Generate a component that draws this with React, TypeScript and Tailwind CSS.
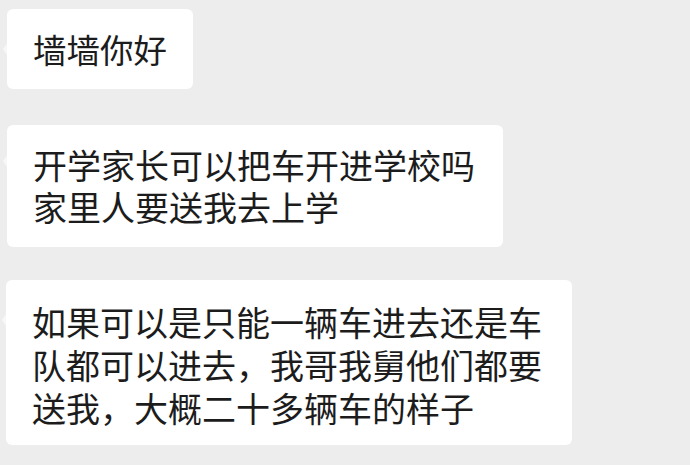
const messages = [
  { lines: ["墙墙你好"], size: "text-[33.5px] leading-[42px]", box: "mt-[9px] ml-[7px] pt-[19px] pb-[19px] pl-[26px] pr-[26px]", tail: "top-[34px]" },
  {
    lines: ["开学家长可以把车开进学校吗", "家里人要送我去上学"],
    size: "text-[34px] leading-[42px]",
    box: "mt-[36px] ml-[7px] pt-[19px] pb-[19px] pl-[26px] pr-[28px]",
    tail: "top-[30px]",
  },
  {
    lines: ["如果可以是只能一辆车进去还是车", "队都可以进去，我哥我舅他们都要", "送我，大概二十多辆车的样子"],
    size: "text-[34px] leading-[43px]",
    box: "mt-[33px] ml-[6px] pt-[20px] pb-[16px] pl-[26px] pr-[30px]",
    tail: "top-[34px]",
  },
];

export default function App() {
  return (
    <div className="w-[690px] h-[465px] overflow-hidden bg-[#ededed] flex flex-col items-start font-['Noto_Sans_CJK_SC',sans-serif] text-[#1c1c1c]">
      {messages.map((m, i) => (
        <div key={i} className={`relative w-fit rounded-[6px] bg-white ${m.box}`}>
          <span
            className={`absolute -left-[4px] ${m.tail} w-0 h-0 border-y-[6px] border-y-transparent border-r-[4px] border-r-[#f7f7f7]`}
          />
          <p className={`${m.size} whitespace-nowrap`}>
            {m.lines.map((l, j) => (
              <span key={j} className="block">
                {l}
              </span>
            ))}
          </p>
        </div>
      ))}
    </div>
  );
}
